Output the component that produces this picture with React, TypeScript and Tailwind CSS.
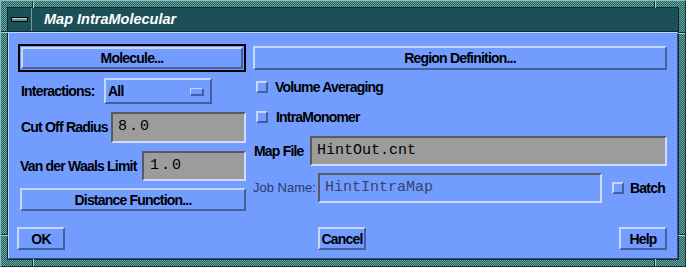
import React from 'react';

const raised =
  'border-2 border-t-[#c8d6ff] border-l-[#c8d6ff] border-r-[#46609e] border-b-[#46609e]';
const sunken =
  'border-2 border-t-[#5a5a5a] border-l-[#5a5a5a] border-r-[#d0dbff] border-b-[#d0dbff]';

const Btn = ({ children, className = '' }: { children: React.ReactNode; className?: string }) => (
  <div className={`flex shrink-0 items-center justify-center bg-[#739cff] ${raised} ${className}`}>
    <span className="whitespace-nowrap leading-none">{children}</span>
  </div>
);

const Check = () => (
  <div className="h-[12px] w-[12px] shrink-0 border-2 border-t-[#c8d6ff] border-l-[#c8d6ff] border-r-[#46609e] border-b-[#46609e] bg-[#739cff]" />
);

const Field = ({ value, className = '', grey = true }: { value: string; className?: string; grey?: boolean }) => (
  <div
    className={`flex h-full shrink-0 items-center pl-[5px] font-['Liberation_Mono',monospace] text-[15px] font-normal tracking-normal ${sunken} ${
      grey ? 'bg-[#9c9c9c] text-black' : 'bg-[#739cff] text-[#34446c]'
    } ${className}`}
  >
    {value}
  </div>
);

// little light/dark tick marks on the window frame (resize corners)
const Notch = ({ className }: { className: string }) => (
  <span className={`absolute ${className}`} />
);

export default function App() {
  return (
    <div className="relative h-[267px] w-[686px] border border-t-[#8cc0c0] border-l-[#8cc0c0] border-r-[#0e3434] border-b-[#0e3434] bg-[repeating-conic-gradient(#24605f_0%_25%,#6aa6a4_0%_50%)] bg-[length:2px_2px] p-[6px] font-['Liberation_Sans',Arial,sans-serif] text-[14px] font-bold tracking-[-0.8px] text-black">
      <Notch className="left-[31px] top-0 h-[7px] w-px bg-[#0e3434]" />
      <Notch className="left-[32px] top-0 h-[7px] w-px bg-[#9fd0d0]" />
      <Notch className="left-[653px] top-0 h-[7px] w-px bg-[#0e3434]" />
      <Notch className="left-[654px] top-0 h-[7px] w-px bg-[#9fd0d0]" />
      <Notch className="left-[31px] bottom-0 h-[7px] w-px bg-[#0e3434]" />
      <Notch className="left-[32px] bottom-0 h-[7px] w-px bg-[#9fd0d0]" />
      <Notch className="left-[653px] bottom-0 h-[7px] w-px bg-[#0e3434]" />
      <Notch className="left-[654px] bottom-0 h-[7px] w-px bg-[#9fd0d0]" />
      <Notch className="left-0 top-[30px] h-px w-[7px] bg-[#0e3434]" />
      <Notch className="left-0 top-[31px] h-px w-[7px] bg-[#9fd0d0]" />
      <Notch className="right-0 top-[31px] h-px w-[7px] bg-[#0e3434]" />
      <Notch className="right-0 top-[32px] h-px w-[7px] bg-[#9fd0d0]" />
      <Notch className="left-0 top-[233px] h-px w-[7px] bg-[#0e3434]" />
      <Notch className="left-0 top-[234px] h-px w-[7px] bg-[#9fd0d0]" />
      <Notch className="right-0 top-[233px] h-px w-[7px] bg-[#0e3434]" />
      <Notch className="right-0 top-[234px] h-px w-[7px] bg-[#9fd0d0]" />

      <div className="flex h-full flex-col border border-[#0c2c30]">
        {/* Title bar */}
        <div className="flex h-[24px] border-b border-[#0c2a2e] bg-[#1c4f58]">
          <div className="flex w-[24px] items-center justify-center border-r border-r-[#6aa0a4]">
            <div className="h-[5px] w-[17px] border border-black bg-[#5f9294] shadow-[inset_0_1px_0_#a8d4d4]" />
          </div>
          <div className="flex items-start pl-[12px] pt-[2px] text-[14.5px] font-bold italic leading-[18px] tracking-normal text-white">
            Map IntraMolecular
          </div>
        </div>

        {/* Body */}
        <div className="flex flex-1 flex-col border border-t-[#c6d4ff] border-l-[#c6d4ff] border-r-[#3a4f88] border-b-[#3a4f88] bg-[#739cff] pl-[9px] pr-[10px]">
          <div className="flex gap-[7px]">
            {/* left column */}
            <div className="flex w-[228px] shrink-0 flex-col">
              <div className="mt-[11px] h-[28px] border-2 border-black p-px">
                <Btn className="h-full">Molecule...</Btn>
              </div>
              <div className="mt-[6px] flex h-[26px] items-center">
                <span className="ml-[3px] w-[83px] shrink-0 whitespace-nowrap">Interactions:</span>
                <div className={`flex h-full w-[108px] items-center justify-between pl-[2px] pr-[7px] ${raised}`}>
                  <span>All</span>
                  <div className="h-[7px] w-[13px] border border-t-[#c8d6ff] border-l-[#c8d6ff] border-r-[#46609e] border-b-[#46609e] shadow-[1px_1px_0_#46609e]" />
                </div>
              </div>
              <div className="mt-[8px] flex h-[31px] items-center justify-between">
                <span className="ml-[3px] whitespace-nowrap">Cut Off Radius</span>
                <Field value="8.0" className="w-[135px] !tracking-[2px]" />
              </div>
              <div className="mt-[8px] flex h-[30px] items-center justify-between">
                <span className="ml-[2px] whitespace-nowrap">Van der Waals Limit</span>
                <Field value="1.0" className="w-[104px] !pl-[6px] !tracking-[2px]" />
              </div>
              <Btn className="ml-[2px] mt-[7px] h-[23px] w-[226px]">Distance Function...</Btn>
            </div>

            {/* right column */}
            <div className="flex flex-1 flex-col">
              <Btn className="mt-[13px] h-[24px]">Region Definition...</Btn>
              <div className="mt-[11px] flex h-[12px] items-center">
                <div className="ml-[3px]"><Check /></div>
                <span className="ml-[7px] whitespace-nowrap">Volume Averaging</span>
              </div>
              <div className="mt-[18px] flex h-[12px] items-center">
                <div className="ml-[3px]"><Check /></div>
                <span className="ml-[8px] whitespace-nowrap">IntraMonomer</span>
              </div>
              <div className="mt-[13px] flex h-[30px] items-center justify-between">
                <span className="ml-[1px] whitespace-nowrap">Map File</span>
                <Field value="HintOut.cnt" className="w-[357px]" />
              </div>
              <div className="mt-[7px] flex h-[30px] items-center">
                <span className="w-[65px] shrink-0 whitespace-nowrap text-[13px] font-normal tracking-normal text-[#2a3a66]">Job Name:</span>
                <Field value="HintIntraMap" grey={false} className="w-[284px]" />
                <div className="ml-[10px]"><Check /></div>
                <span className="ml-[6px]">Batch</span>
              </div>
            </div>
          </div>

          <div className="-ml-px mb-[8px] mt-auto flex justify-between">
            <Btn className="h-[23px] w-[48px]">OK</Btn>
            <Btn className="h-[23px] w-[48px]">Cancel</Btn>
            <Btn className="h-[23px] w-[48px]">Help</Btn>
          </div>
        </div>
      </div>
    </div>
  );
}
